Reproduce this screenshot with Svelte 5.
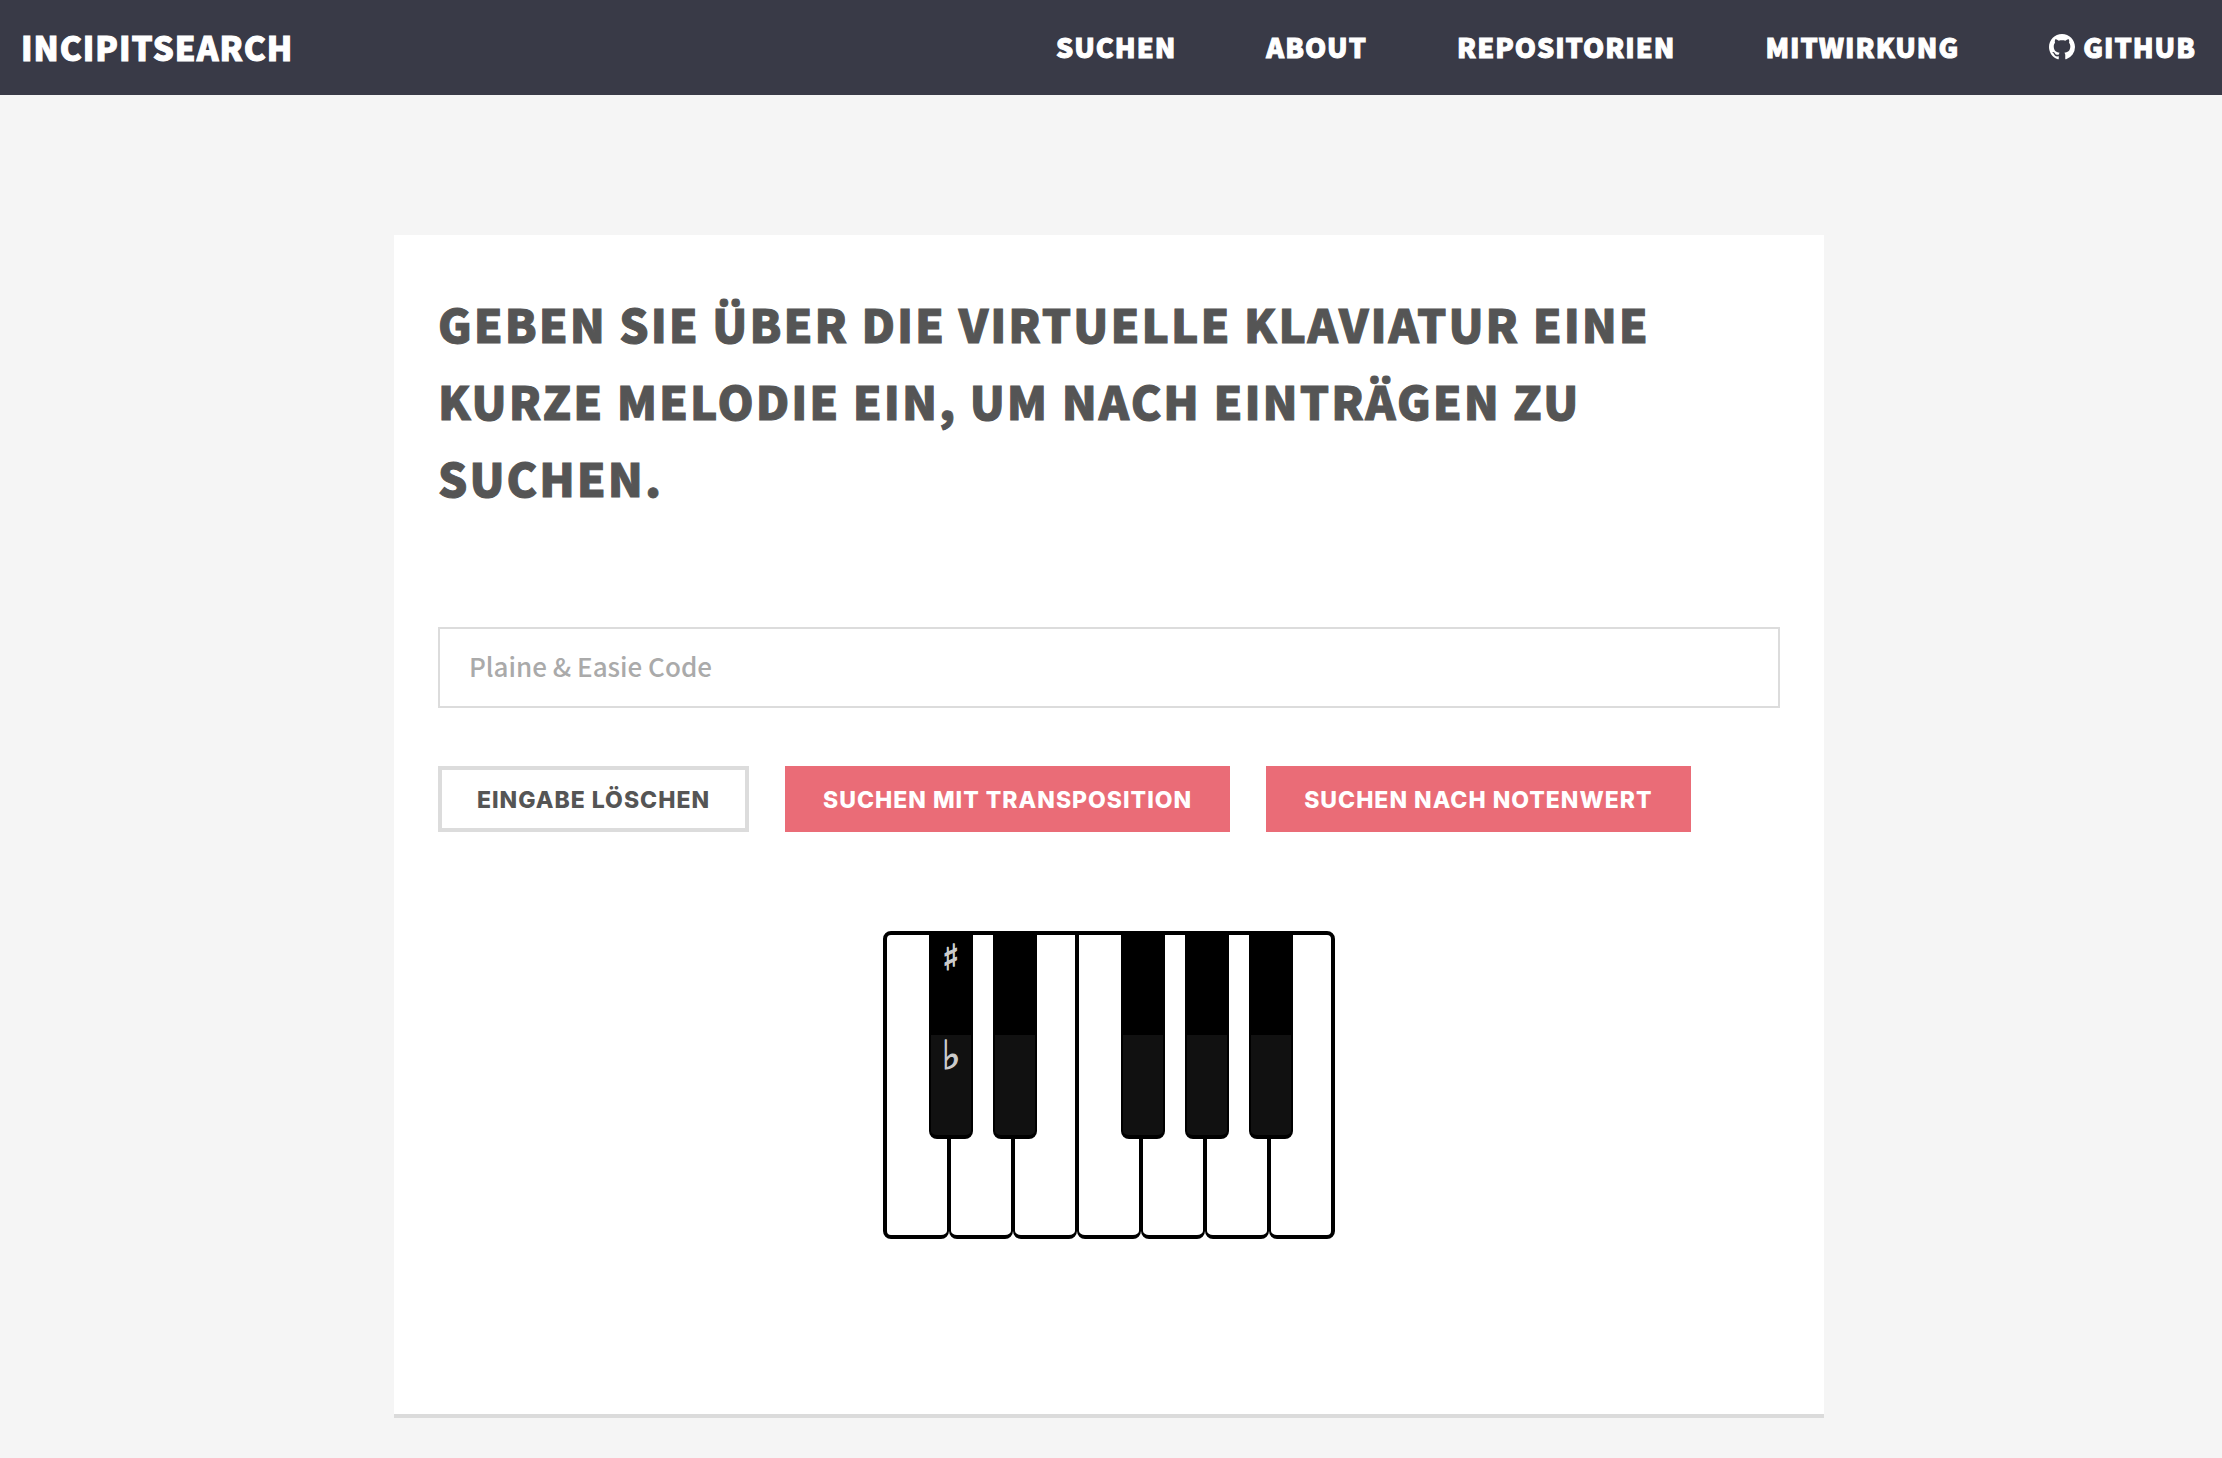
<script>
  const links = [
    { label: 'Suchen', href: '#suchen' },
    { label: 'About', href: '#about' },
    { label: 'Repositorien', href: '#repositorien' },
    { label: 'Mitwirkung', href: '#mitwirkung' }
  ];

  const keys = [
    { note: 'C', black: true, marks: ['♯', '♭'] },
    { note: 'D', black: true },
    { note: 'E' },
    { note: 'F', black: true },
    { note: 'G', black: true },
    { note: 'A', black: true },
    { note: 'B' }
  ];

  let code = $state('');
</script>

<header>
  <a class="brand" href="#start">IncipitSearch</a>
  <nav>
    {#each links as link}
      <a href={link.href}>{link.label}</a>
    {/each}
    <a class="github" href="#github">
      <svg viewBox="0 0 16 16" aria-hidden="true">
        <path d="M8 0C3.58 0 0 3.58 0 8c0 3.54 2.29 6.53 5.47 7.59.4.07.55-.17.55-.38 0-.19-.01-.82-.01-1.49-2.01.37-2.53-.49-2.69-.94-.09-.23-.48-.94-.82-1.13-.28-.15-.68-.52-.01-.53.63-.01 1.08.58 1.23.82.72 1.21 1.87.87 2.33.66.07-.52.28-.87.51-1.07-1.78-.2-3.64-.89-3.64-3.95 0-.87.31-1.59.82-2.15-.08-.2-.36-1.02.08-2.12 0 0 .67-.21 2.2.82.64-.18 1.32-.27 2-.27s1.36.09 2 .27c1.53-1.04 2.2-.82 2.2-.82.44 1.1.16 1.92.08 2.12.51.56.82 1.27.82 2.15 0 3.07-1.87 3.75-3.65 3.95.29.25.54.73.54 1.48 0 1.07-.01 1.93-.01 2.2 0 .21.15.46.55.38A8.01 8.01 0 0 0 16 8c0-4.42-3.58-8-8-8z" />
      </svg>
      GitHub
    </a>
  </nav>
</header>

<main>
  <section class="card">
    <h1>Geben Sie über die virtuelle Klaviatur eine kurze Melodie ein, um nach Einträgen zu suchen.</h1>
    <form onsubmit={(event) => event.preventDefault()}>
      <input type="text" aria-label="Plaine &amp; Easie Code" placeholder="Plaine & Easie Code" bind:value={code} />
      <div class="actions">
        <button type="button" class="outline" onclick={() => (code = '')}>Eingabe löschen</button>
        <button type="submit">Suchen mit Transposition</button>
        <button type="submit">Suchen nach Notenwert</button>
      </div>
    </form>
    <div class="piano">
      {#each keys as key}
        <div class="key">
          <button type="button" class="white" aria-label={key.note} onclick={() => (code += key.note)}></button>
          {#if key.black}
            <div class="black">
              <button type="button" class="sharp" aria-label="{key.note} ♯" onclick={() => (code += 'x' + key.note)}>{key.marks?.[0] ?? ''}</button>
              <button type="button" class="flat" aria-label="{key.note} ♭" onclick={() => (code += 'b' + key.note)}>{key.marks?.[1] ?? ''}</button>
            </div>
          {/if}
        </div>
      {/each}
    </div>
  </section>
</main>

<style>
  :global(body) {
    margin: 0;
    background: #f5f5f5;
    color: #555;
    font-family: 'Noto Sans CJK JP', 'Noto Sans', sans-serif;
  }

  * {
    box-sizing: border-box;
  }

  header {
    display: flex;
    align-items: center;
    justify-content: space-between;
    min-height: 95px;
    padding: 0 26px 2px 21px;
    background: #393a47;
  }

  header a {
    color: #fff;
    font-weight: 900;
    text-decoration: none;
    text-transform: uppercase;
    -webkit-text-stroke: 1px currentColor;
  }

  .brand {
    font-size: 33px;
    line-height: 48px;
    letter-spacing: 1px;
  }

  nav {
    display: flex;
    gap: 90px;
    font-size: 27px;
    line-height: 40px;
    letter-spacing: 1px;
  }

  .github {
    display: flex;
    align-items: center;
    gap: 8px;
  }

  .github svg {
    width: 26px;
    height: 26px;
    fill: #fff;
  }

  main {
    padding: 140px 4px 40px 0;
  }

  .card {
    width: 100%;
    max-width: 1430px;
    margin: 0 auto;
    padding: 50px 44px 175px;
    background: #fff;
    border-bottom: 4px solid #dbdbdb;
  }

  h1 {
    margin: 0 0 111px;
    font-size: 46px;
    font-weight: 900;
    line-height: 77px;
    letter-spacing: 2px;
    text-transform: uppercase;
    -webkit-text-stroke: 1px currentColor;
  }

  input {
    display: block;
    width: 100%;
    height: 81px;
    padding: 0 29px 4px;
    border: 2px solid #dcdcdc;
    border-radius: 0;
    background: #fff;
    color: #555;
    font-family: inherit;
    font-size: 26px;
    font-weight: 500;
  }

  input::placeholder {
    color: #aaa;
    opacity: 1;
  }

  .actions {
    display: flex;
    flex-wrap: wrap;
    gap: 36px;
    margin-top: 58px;
  }

  .actions button {
    height: 66px;
    padding: 2px 38px 0;
    border: 0;
    background: #ea6c77;
    color: #fff;
    font-family: Inter, sans-serif;
    font-size: 23px;
    font-weight: 800;
    letter-spacing: 1px;
    text-transform: uppercase;
  }

  .actions .outline {
    padding: 2px 35px 0;
    border: 4px solid #dcdcdc;
    background: #fff;
    color: #555;
  }

  .piano {
    display: flex;
    justify-content: center;
    margin-top: 99px;
  }

  .key {
    position: relative;
    width: 64px;
    height: 308px;
  }

  .key:first-child,
  .key:last-child {
    width: 66px;
  }

  .white {
    display: block;
    width: 100%;
    height: 100%;
    padding: 0;
    border: solid #000;
    border-width: 4px 2px;
    border-radius: 0 0 8px 8px;
    background: #fff;
  }

  .key:first-child .white {
    border-left-width: 4px;
    border-top-left-radius: 8px;
  }

  .key:last-child .white {
    border-right-width: 4px;
    border-top-right-radius: 8px;
  }

  .black {
    position: absolute;
    z-index: 1;
    top: 4px;
    right: -24px;
    width: 44px;
  }

  .black button {
    display: block;
    width: 100%;
    padding: 0;
    color: #ccc;
    font-family: 'DejaVu Sans', sans-serif;
    line-height: 40px;
    -webkit-text-stroke: 1px currentColor;
  }

  .black .sharp {
    height: 100px;
    padding-bottom: 54px;
    border: 0;
    background: #000;
    font-size: 36px;
  }

  .black .flat {
    height: 104px;
    padding-bottom: 66px;
    border: solid #000;
    border-width: 0 2px 4px;
    border-radius: 0 0 8px 8px;
    background: #111;
    font-size: 40px;
  }
</style>
